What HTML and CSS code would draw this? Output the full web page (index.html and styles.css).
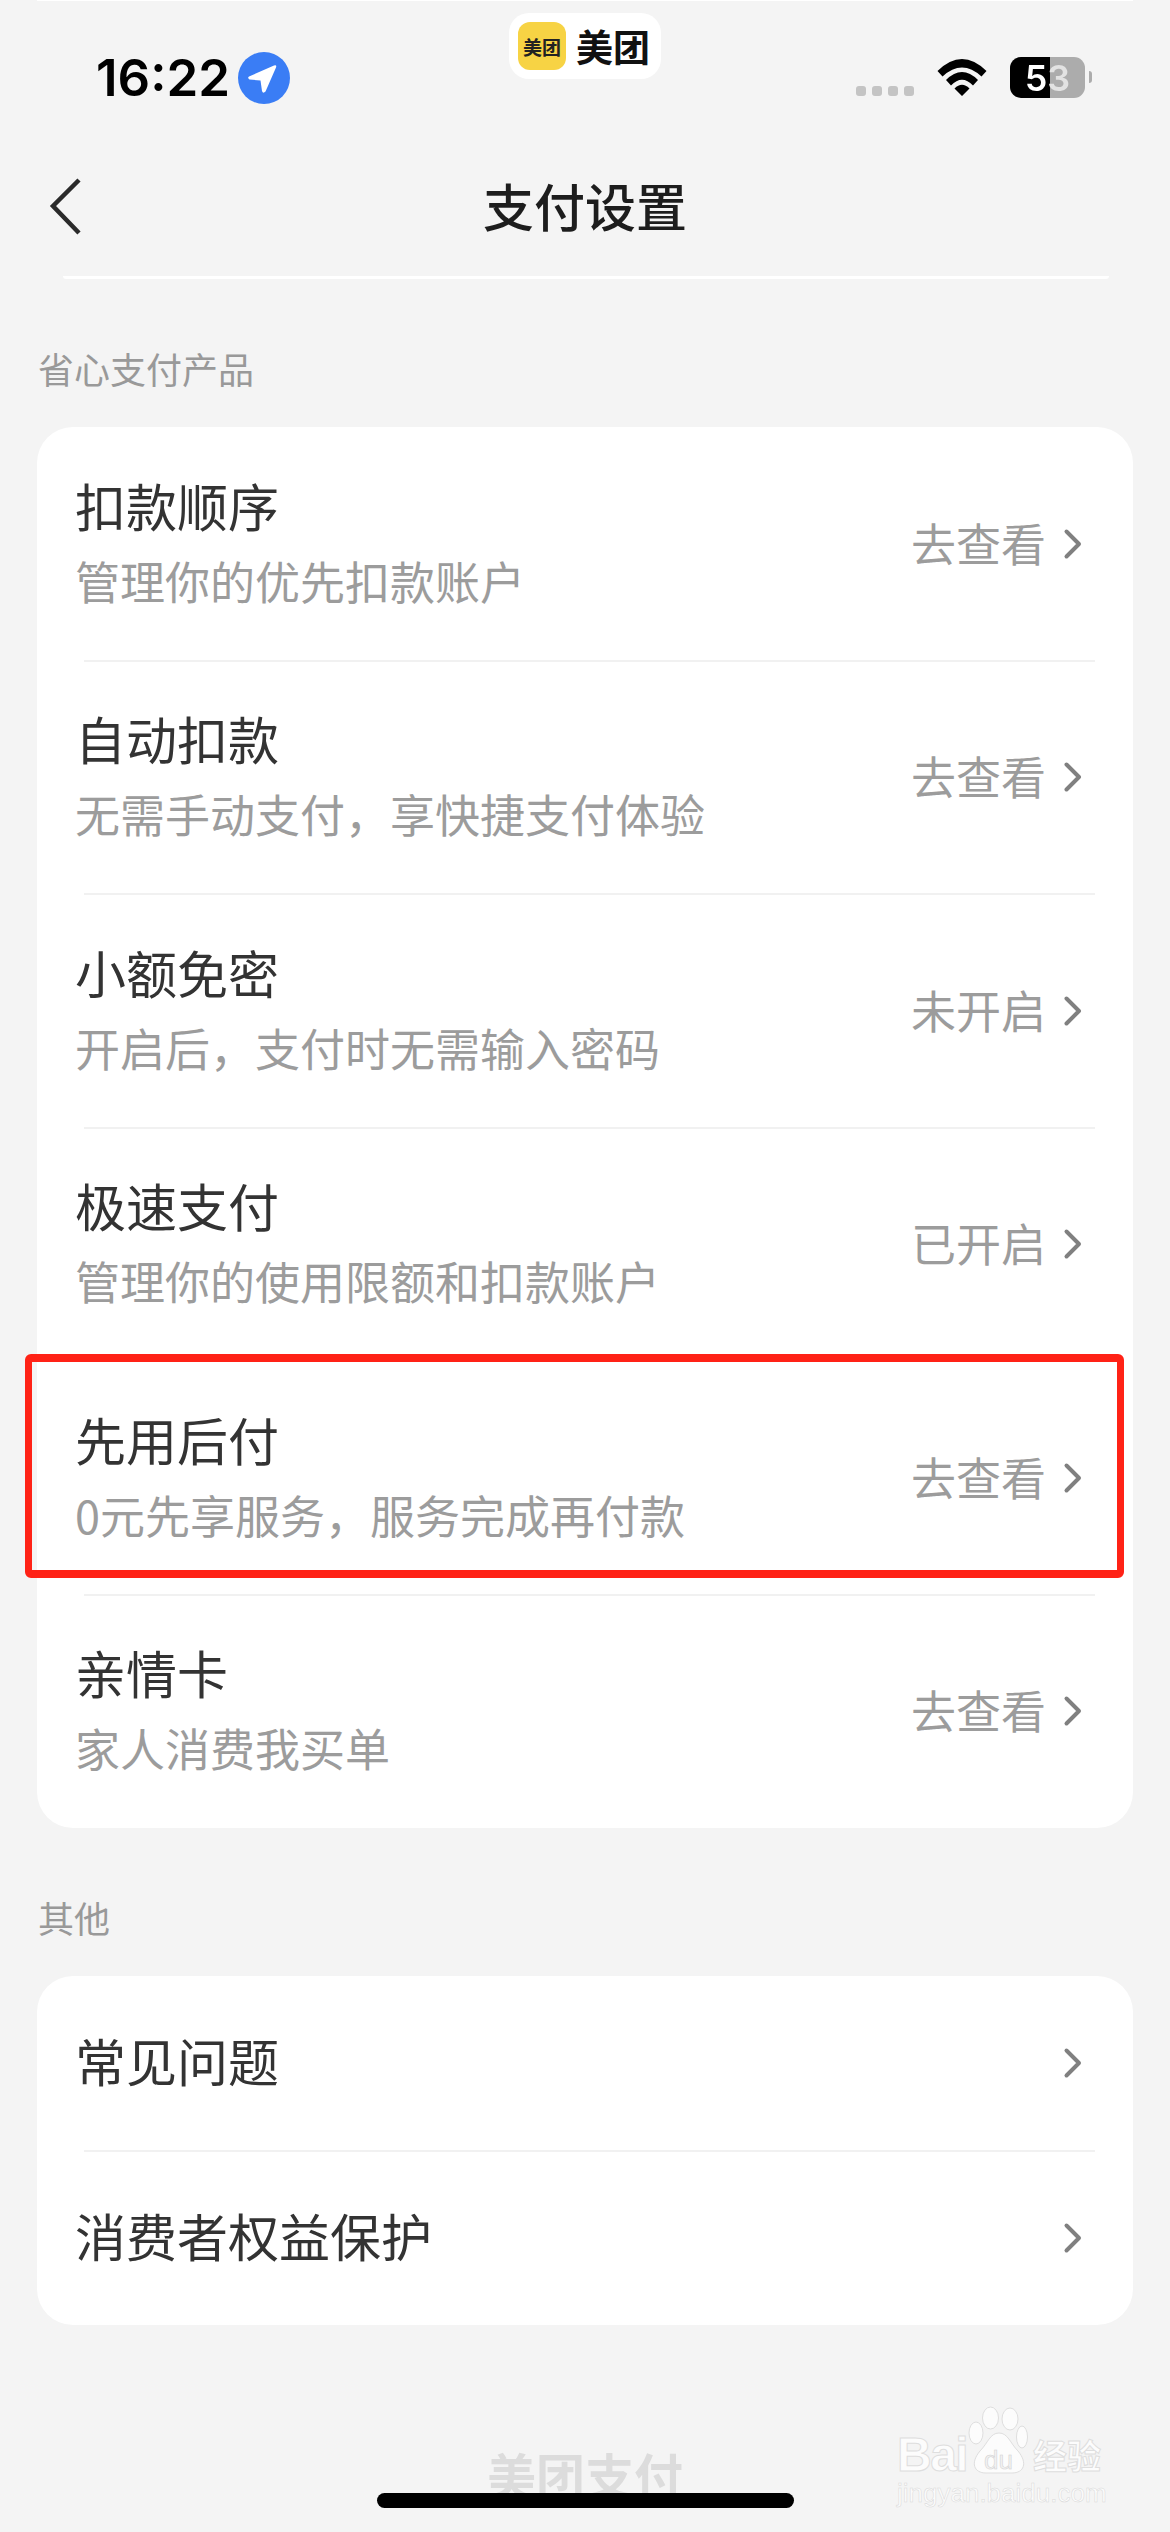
FILE: index.html
```html
<!DOCTYPE html>
<html lang="zh-CN">
<head>
<meta charset="utf-8">
<title>支付设置</title>
<link rel="stylesheet" href="styles.css">
</head>
<body>
<div class="screen">
  <header class="status">
    <div class="time-group">
      <span class="time">16:22</span>
      <svg class="loc" viewBox="0 0 52 52"><circle cx="26" cy="26" r="26" fill="#3a7df5"/><path d="M11 24.500 L36 13.500 Q39 12.500 38 15.500 L27.500 39.500 Q25 42 24 39 L22.500 28.500 L11.500 27.500 Q9 26 11 24.500Z" fill="#fff"/></svg>
    </div>
    <div class="app-pill">
      <span class="app-icon">美团</span>
      <span class="app-name">美团</span>
    </div>
    <div class="status-right">
      <span class="dots"><i></i><i></i><i></i><i></i></span>
      <svg class="wifi" viewBox="0 0 50 37"><path d="M0.500 12 Q25 -12 49.500 12 L44.500 17.500 Q25 -0.500 5.500 17.500Z M9 21 Q25 5 41 21 L36 26.500 Q25 15 14 26.500Z M17.500 29.500 Q25 22 32.500 29.500 L25 37Z" fill="#000"/></svg>
      <span class="battery"><span class="bat-num">53</span></span>
      <span class="bat-cap"></span>
    </div>
  </header>

  <nav class="nav">
    <svg class="back" viewBox="0 0 34 58"><path d="M31 3 L5 29 L31 56" fill="none" stroke="#2a2a2a" stroke-width="4.500"/></svg>
    <h1 class="title">支付设置</h1>
  </nav>
  <div class="nav-line"></div>

  <h2 class="section">省心支付产品</h2>
  <section class="card">
    <div class="row"><div class="text"><div class="name">扣款顺序</div><div class="desc">管理你的优先扣款账户</div></div><div class="side"><span>去查看</span><svg class="chev" viewBox="0 0 20 32"><path d="M3.500 3.500 L16 16 L3.500 28.500" fill="none" stroke="#808080" stroke-width="4" stroke-linecap="round" stroke-linejoin="round"/></svg></div></div>
    <div class="row"><div class="text"><div class="name">自动扣款</div><div class="desc">无需手动支付，享快捷支付体验</div></div><div class="side"><span>去查看</span><svg class="chev" viewBox="0 0 20 32"><path d="M3.500 3.500 L16 16 L3.500 28.500" fill="none" stroke="#808080" stroke-width="4" stroke-linecap="round" stroke-linejoin="round"/></svg></div></div>
    <div class="row"><div class="text"><div class="name">小额免密</div><div class="desc">开启后，支付时无需输入密码</div></div><div class="side"><span>未开启</span><svg class="chev" viewBox="0 0 20 32"><path d="M3.500 3.500 L16 16 L3.500 28.500" fill="none" stroke="#808080" stroke-width="4" stroke-linecap="round" stroke-linejoin="round"/></svg></div></div>
    <div class="row"><div class="text"><div class="name">极速支付</div><div class="desc">管理你的使用限额和扣款账户</div></div><div class="side"><span>已开启</span><svg class="chev" viewBox="0 0 20 32"><path d="M3.500 3.500 L16 16 L3.500 28.500" fill="none" stroke="#808080" stroke-width="4" stroke-linecap="round" stroke-linejoin="round"/></svg></div></div>
    <div class="row"><div class="text"><div class="name">先用后付</div><div class="desc">0元先享服务，服务完成再付款</div></div><div class="side"><span>去查看</span><svg class="chev" viewBox="0 0 20 32"><path d="M3.500 3.500 L16 16 L3.500 28.500" fill="none" stroke="#808080" stroke-width="4" stroke-linecap="round" stroke-linejoin="round"/></svg></div><div class="highlight"></div></div>
    <div class="row"><div class="text"><div class="name">亲情卡</div><div class="desc">家人消费我买单</div></div><div class="side"><span>去查看</span><svg class="chev" viewBox="0 0 20 32"><path d="M3.500 3.500 L16 16 L3.500 28.500" fill="none" stroke="#808080" stroke-width="4" stroke-linecap="round" stroke-linejoin="round"/></svg></div></div>
  </section>

  <h2 class="section section-other">其他</h2>
  <section class="card">
    <div class="row row-single"><div class="name">常见问题</div><div class="side"><svg class="chev" viewBox="0 0 20 32"><path d="M3.500 3.500 L16 16 L3.500 28.500" fill="none" stroke="#808080" stroke-width="4" stroke-linecap="round" stroke-linejoin="round"/></svg></div></div>
    <div class="row row-single"><div class="name">消费者权益保护</div><div class="side"><svg class="chev" viewBox="0 0 20 32"><path d="M3.500 3.500 L16 16 L3.500 28.500" fill="none" stroke="#808080" stroke-width="4" stroke-linecap="round" stroke-linejoin="round"/></svg></div></div>
  </section>

  <div class="footer-brand">美团支付</div>
  <div class="home-bar"></div>

  <div class="watermark">
    <svg class="paw" viewBox="0 0 62 70"><g fill="#fcfcfc" stroke="#dedede" stroke-width="1"><ellipse cx="24.500" cy="13" rx="8" ry="11"/><ellipse cx="44" cy="14" rx="8" ry="11"/><ellipse cx="10" cy="28" rx="7" ry="11"/><ellipse cx="56" cy="32" rx="5.500" ry="11"/><path d="M33 28 C42 28 44 38 52 46 C62 58 58 68 46 68 L20 68 C8 68 4 58 14 46 C22 38 24 28 33 28Z"/></g></svg>
    <span class="wm-bai">Bai</span>
    <span class="wm-du">du</span>
    <span class="wm-jy">经验</span>
    <span class="wm-url">jingyan.baidu.com</span>
  </div>
</div>
</body>
</html>
```
FILE: styles.css
```css
* { box-sizing: border-box; margin: 0; padding: 0; }
html, body { background: #f4f4f4; }
body { width: 1170px; height: 2532px; overflow: hidden; font-family: "Noto Sans CJK SC", "Liberation Sans", sans-serif; }
.screen { position: relative; width: 1170px; height: 2532px; background: #f4f4f4; overflow: hidden; }

.status { position: relative; height: 128px; }
.status::before { content: ""; position: absolute; left: 37px; right: 37px; top: 0; height: 1px; background: #fff; }
.time-group { position: absolute; left: 96px; top: 52px; display: flex; align-items: center; gap: 8px; }
.time { font-family: Inter, "Liberation Sans", sans-serif; font-weight: 600; font-size: 51px; line-height: 52px; color: #000; }
.loc { width: 52px; height: 52px; }
.app-pill { position: absolute; left: 509px; top: 13px; width: 152px; height: 66px; background: #fff; border-radius: 20px; display: flex; align-items: center; padding-left: 9px; gap: 10px; }
.app-icon { width: 48px; height: 48px; background: #f7d344; border-radius: 12px; font-size: 19px; font-weight: 700; color: #222; display: flex; align-items: center; justify-content: center; white-space: nowrap; }
.app-name { font-size: 37px; font-weight: 700; color: #111; line-height: 1; }
.status-right { position: absolute; left: 856px; top: 57px; display: flex; align-items: flex-start; }
.dots { display: flex; gap: 6px; margin: 29px 23px 0 0; }
.dots i { width: 10px; height: 10px; background: #c4c4c4; border-radius: 3px; display: block; }
.wifi { width: 50px; height: 37px; margin: 2px 23px 0 0; }
.battery { width: 75px; height: 41px; border-radius: 11px; background: linear-gradient(to right, #000 0 40px, #acacac 40px); display: flex; align-items: center; justify-content: center; }
.bat-num { font-family: Inter, "Liberation Sans", sans-serif; font-weight: 600; font-size: 36px; line-height: 1; background: linear-gradient(to right, #fff 0 25px, #e2e2e2 25px); -webkit-background-clip: text; background-clip: text; color: transparent; }
.bat-cap { width: 3px; height: 12px; margin: 14px 0 0 4px; background: #acacac; border-radius: 0 3px 3px 0; }

.nav { position: relative; height: 148px; padding-top: 6px; display: flex; align-items: center; justify-content: center; }
.back { position: absolute; left: 48px; top: 49px; width: 34px; height: 58px; }
.title { font-size: 51px; font-weight: 500; color: #1d1d1d; line-height: 1; }
.nav-line { height: 3px; margin: 0 61px 0 63px; background: #fff; border-radius: 0 0 4px 4px; }

.section { font-size: 36px; font-weight: 400; color: #999; line-height: 40px; height: 40px; margin: 69px 0 39px 38px; }
.section-other { margin-top: 69px; }
.card { margin: 0 37px; background: #fff; border-radius: 36px; }
.row { position: relative; height: 233.500px; display: flex; align-items: center; justify-content: space-between; padding-left: 38px; }
.row + .row::before { content: ""; position: absolute; left: 47px; right: 38px; top: -1px; height: 2px; background: #f1f1f1; }
.row-single { height: 174.500px; }
.row-single .name { margin-bottom: 6px; }
.text { margin-bottom: 7px; }
.name { font-size: 51px; line-height: 60px; color: #333; }
.desc { font-size: 45px; line-height: 50px; color: #9c9c9c; margin-top: 21px; }
.side { display: flex; align-items: center; gap: 17px; font-size: 45px; color: #9c9c9c; padding-right: 50px; }
.side span { margin-top: -3px; }
.chev { width: 20px; height: 32px; }
.highlight { position: absolute; left: -12px; right: 9px; top: -7px; height: 224px; border: solid #ff2216; border-width: 8px 7.500px; border-radius: 6px; }

.footer-brand { position: absolute; left: 487px; top: 2449px; font-size: 49px; font-weight: 700; color: #dcdcdc; line-height: 1; }
.home-bar { position: absolute; left: 377px; top: 2493px; width: 417px; height: 15px; background: #000; border-radius: 8px; }

.watermark { position: absolute; left: 897px; top: 2405px; width: 210px; height: 110px; color: #fcfcfc; }
.paw { position: absolute; left: 69px; top: 0; width: 62px; height: 70px; }
.wm-bai { position: absolute; left: 0; top: 26px; font-family: "Liberation Sans", sans-serif; font-size: 48px; font-weight: 700; line-height: 48px; letter-spacing: -1.500px; -webkit-text-stroke: 1px #dedede; }
.wm-du { position: absolute; left: 87px; top: 42px; font-family: "Liberation Sans", sans-serif; font-size: 26px; line-height: 26px; color: #f2f2f2; -webkit-text-stroke: 0.500px #cfcfcf; }
.wm-jy { position: absolute; left: 136px; top: 33px; font-size: 34px; font-weight: 700; line-height: 34px; -webkit-text-stroke: 1px #dedede; }
.wm-url { position: absolute; left: 0; top: 73px; font-family: "Liberation Sans", sans-serif; font-size: 26px; line-height: 30px; -webkit-text-stroke: 0.500px #d8d8d8; }
```
